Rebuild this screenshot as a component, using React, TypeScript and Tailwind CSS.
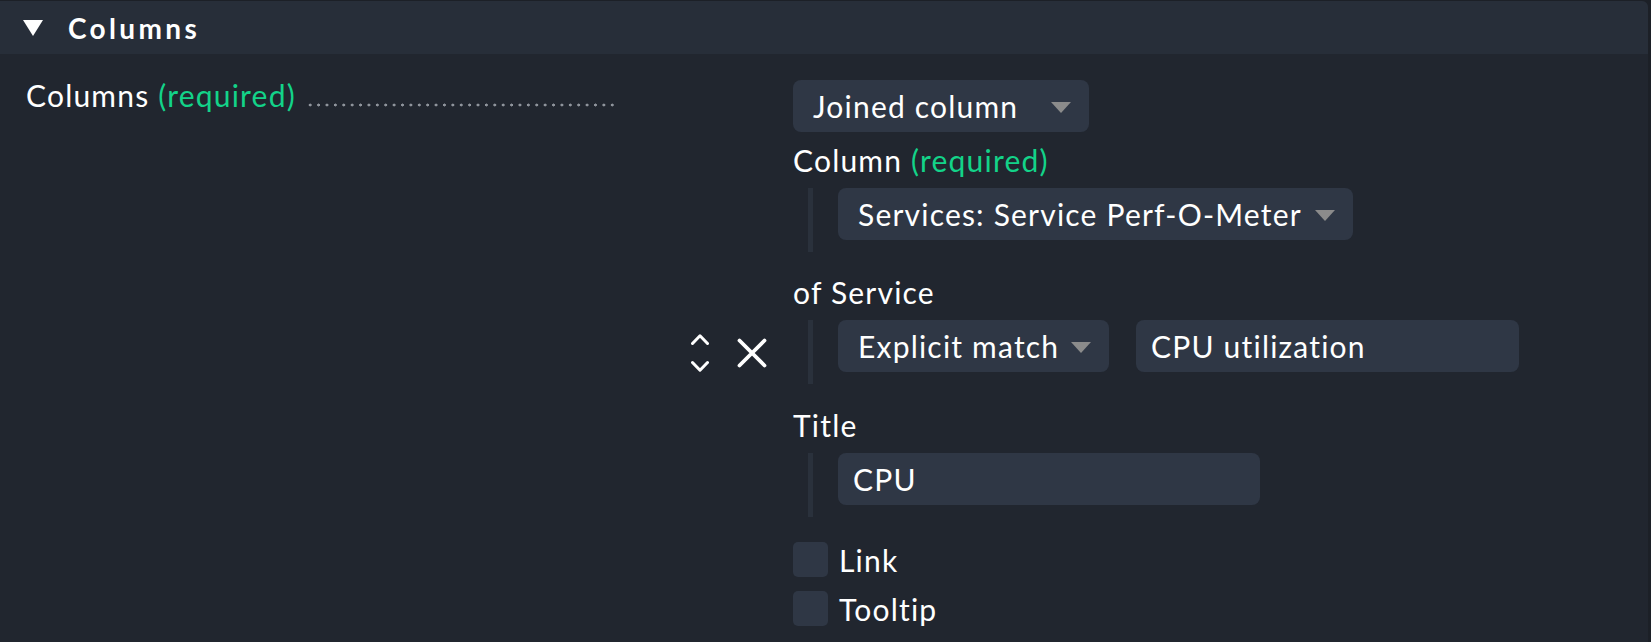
import React from "react";

function Caret() {
  return (
    <svg width="20" height="11" viewBox="0 0 20 11" className="shrink-0">
      <polygon points="0,0 20,0 10,11" fill="#8b8b8b" />
    </svg>
  );
}

function Select({ label, width }: { label: string; width: string }) {
  return (
    <div
      className={`flex h-[52px] items-center justify-between rounded-lg bg-[#2f3745] pl-[20px] pr-[18px] ${width}`}
    >
      <span className="whitespace-nowrap">{label}</span>
      <span className="pt-[2px]">
        <Caret />
      </span>
    </div>
  );
}

function TextInput({ value, width }: { value: string; width: string }) {
  return (
    <div
      className={`flex h-[52px] items-center rounded-lg bg-[#2f3745] pl-[15px] ${width}`}
    >
      <span className="whitespace-nowrap">{value}</span>
    </div>
  );
}

function Entry({
  label,
  required,
  children,
  className,
}: {
  label: string;
  required?: boolean;
  children: React.ReactNode;
  className?: string;
}) {
  return (
    <div className={className}>
      <div className="h-[36px] leading-[36px]">
        {label}
        {required && <span className="text-[#13d389]"> (required)</span>}
      </div>
      <div className="ml-[15px] mt-[10px] border-l-[5px] border-[#2a313c] pb-[12px] pl-[25px]">
        {children}
      </div>
    </div>
  );
}

function Checkbox({ label }: { label: string }) {
  return (
    <label className="flex h-[35px] items-center gap-[11px]">
      <span className="h-[35px] w-[35px] rounded-[5px] bg-[#2f3745]" />
      <span>{label}</span>
    </label>
  );
}

export default function App() {
  return (
    <div className="h-[642px] w-full bg-[#1c2027] pr-[3px] pt-[1px] font-['Lato',sans-serif] text-[30px] leading-[36px] tracking-[0.04em] text-white [font-variant-ligatures:none]">
      <div className="h-full overflow-hidden rounded-tr-md bg-[#21262f]">
        <div className="flex h-[53px] items-center bg-[#272e39] pl-[23px]">
          <svg width="20" height="16" viewBox="0 0 20 16">
            <polygon points="0,0 20,0 10,16" fill="#ffffff" />
          </svg>
          <span className="ml-[25px] text-[28px] font-bold tracking-[0.12em]">
            Columns
          </span>
        </div>

        <div className="flex items-start pl-[26px] pt-[23px]">
          <div className="flex w-[593px] items-baseline">
            <span className="whitespace-nowrap">
              Columns <span className="text-[#13d389]">(required)</span>
            </span>
            <span className="ml-[10px] h-[4px] flex-1 bg-[radial-gradient(circle,#8f949c_1.3px,transparent_1.7px)] bg-[length:8.4px_4px] bg-repeat-x" />
          </div>

          <div className="ml-[72px] mt-[3px] flex items-center">
            <div className="flex items-center">
              <svg width="18" height="38" viewBox="0 0 18 38">
                <polyline
                  points="1.5,9.5 9,1.8 16.5,9.5"
                  fill="none"
                  stroke="#ffffff"
                  strokeWidth="3"
                  strokeLinecap="round"
                  strokeLinejoin="round"
                />
                <polyline
                  points="1.5,28.5 9,36.2 16.5,28.5"
                  fill="none"
                  stroke="#ffffff"
                  strokeWidth="3"
                  strokeLinecap="round"
                  strokeLinejoin="round"
                />
              </svg>
              <svg
                width="30"
                height="30"
                viewBox="0 0 30 30"
                className="ml-[28px]"
              >
                <path
                  d="M2.5 2.5 L27.5 27.5 M27.5 2.5 L2.5 27.5"
                  stroke="#ffffff"
                  strokeWidth="3.8"
                  strokeLinecap="round"
                />
              </svg>
            </div>

            <div className="ml-[26px] flex flex-col">
              <Select label="Joined column" width="w-[296px]" />

              <Entry label="Column" required className="mt-[10px]">
                <Select
                  label="Services: Service Perf-O-Meter"
                  width="w-[515px]"
                />
              </Entry>

              <Entry label="of Service" className="mt-[22px]">
                <div className="flex gap-[27px]">
                  <Select label="Explicit match" width="w-[271px]" />
                  <TextInput value="CPU utilization" width="w-[383px]" />
                </div>
              </Entry>

              <Entry label="Title" className="mt-[23px]">
                <TextInput value="CPU" width="w-[422px]" />
              </Entry>

              <div className="mt-[25px] flex flex-col gap-[14px]">
                <Checkbox label="Link" />
                <Checkbox label="Tooltip" />
              </div>
            </div>
          </div>
        </div>
      </div>
    </div>
  );
}
